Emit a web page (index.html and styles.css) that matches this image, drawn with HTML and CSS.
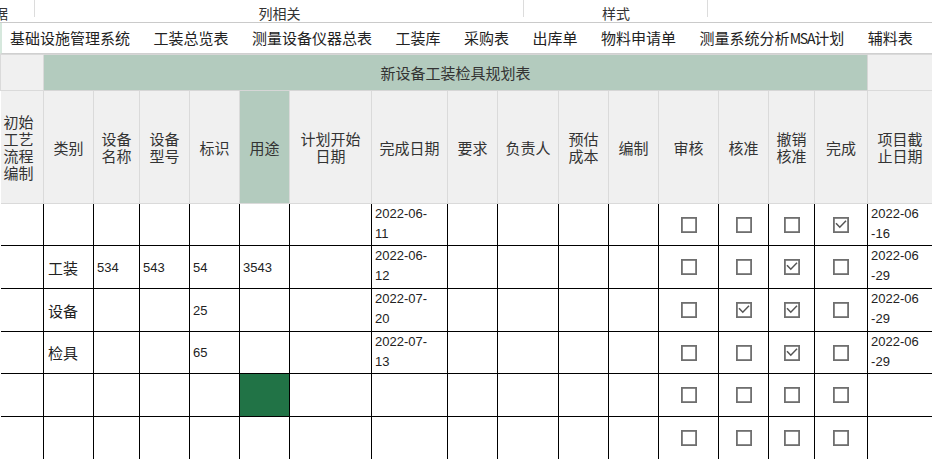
FILE: index.html
```html
<!DOCTYPE html>
<html lang="zh-CN">
<head>
    <meta charset="UTF-8">
    <title>新设备工装检具规划表</title>
    <link rel="stylesheet" href="styles.css">
</head>
<body>
    <div class="ribbon">
        <div class="grp grp-a">数据</div>
        <div class="grp grp-b">列相关</div>
        <div class="grp grp-c">样式</div>
        <div class="grp grp-d"></div>
    </div>

    <div class="tabs">
        <span>基础设施管理系统</span>
        <span>工装总览表</span>
        <span>测量设备仪器总表</span>
        <span>工装库</span>
        <span>采购表</span>
        <span>出库单</span>
        <span>物料申请单</span>
        <span>测量系统分析<span class="latin">MSA</span>计划</span>
        <span>辅料表</span>
    </div>

    <table class="sheet">
        <colgroup>
            <col style="width:43px"><col style="width:50px"><col style="width:46px"><col style="width:50px">
            <col style="width:50px"><col style="width:50px"><col style="width:82px"><col style="width:76px">
            <col style="width:50px"><col style="width:61px"><col style="width:50px"><col style="width:50px">
            <col style="width:60px"><col style="width:50px"><col style="width:46px"><col style="width:53px">
            <col style="width:65px">
        </colgroup>
        <tr class="title-row">
            <td class="hd"></td>
            <td class="band" colspan="15">新设备工装检具规划表</td>
            <td class="hd"></td>
        </tr>
        <tr class="head-row">
            <td class="hd first">初始<br>工艺<br>流程<br>编制</td>
            <td class="hd">类别</td>
            <td class="hd">设备<br>名称</td>
            <td class="hd">设备<br>型号</td>
            <td class="hd">标识</td>
            <td class="hd green">用途</td>
            <td class="hd">计划开始<br>日期</td>
            <td class="hd">完成日期</td>
            <td class="hd">要求</td>
            <td class="hd">负责人</td>
            <td class="hd">预估<br>成本</td>
            <td class="hd">编制</td>
            <td class="hd">审核</td>
            <td class="hd">核准</td>
            <td class="hd">撤销<br>核准</td>
            <td class="hd">完成</td>
            <td class="hd">项目截<br>止日期</td>
        </tr>
    </table>

    <script>
        // rows: [类别, 名称, 型号, 标识, 用途, 完成日期, checks(审核,核准,撤销核准,完成), 截止日期]
        var rows = [
            ['', '', '', '', '', '2022-06-<br>11', [0, 0, 0, 1], '2022-06<br>-16'],
            ['工装', '534', '543', '54', '3543', '2022-06-<br>12', [0, 0, 1, 0], '2022-06<br>-29'],
            ['设备', '', '', '25', '', '2022-07-<br>20', [0, 1, 1, 0], '2022-06<br>-29'],
            ['检具', '', '', '65', '', '2022-07-<br>13', [0, 0, 1, 0], '2022-06<br>-29'],
            ['', '', '', '', 'sel', '', [0, 0, 0, 0], ''],
            ['', '', '', '', '', '', [0, 0, 0, 0], '']
        ];

        function checkbox(on) {
            var svg = '<svg class="cb" width="16" height="16" viewBox="0 0 16 16">' +
                '<rect x="0.9" y="0.9" width="14.2" height="14.2" fill="#fff" stroke="#6f6f6f" stroke-width="1.8"/>';
            if (on) {
                svg += '<polyline points="3,6.2 6.8,10.2 13,3.8" fill="none" stroke="#555" stroke-width="1.5"/>';
            }
            return svg + '</svg>';
        }

        var table = document.querySelector('.sheet');
        rows.forEach(function (r, i) {
            var tr = document.createElement('tr');
            tr.className = 'data-row' + (i % 3 === 0 ? ' short' : '');
            var html = '<td class="first"></td>';
            html += '<td class="cjk">' + r[0] + '</td>';
            html += '<td class="num">' + r[1] + '</td>';
            html += '<td class="num">' + r[2] + '</td>';
            html += '<td class="num">' + r[3] + '</td>';
            html += r[4] === 'sel' ? '<td class="selected"></td>' : '<td class="num">' + r[4] + '</td>';
            html += '<td></td>';
            html += '<td class="num date">' + r[5] + '</td>';
            html += '<td></td><td></td><td></td><td></td>';
            r[6].forEach(function (c) {
                html += '<td class="check">' + checkbox(c) + '</td>';
            });
            html += '<td class="num date">' + r[7] + '</td>';
            tr.innerHTML = html;
            table.appendChild(tr);
        });
    </script>
</body>
</html>
```
FILE: styles.css
```css
body {
    margin: 0;
    width: 932px;
    height: 459px;
    overflow: hidden;
    background: #fff;
    color: #222;
    font-family: "Noto Sans CJK SC", sans-serif;
}

.ribbon {
    display: flex;
    height: 22px;
    border-bottom: 1px solid #cacaca;
    font-size: 14px;
    color: #333;
}
.grp {
    height: 22px;
    line-height: 26px;
    text-align: center;
    white-space: nowrap;
    overflow: hidden;
    box-sizing: border-box;
    background: linear-gradient(#dcdcdc, #dcdcdc) no-repeat right top / 1px 17px;
}
.grp-a {
    width: 35px;
    text-align: right;
    padding-right: 27px;
    direction: rtl;
}
.grp-b {
    width: 489px;
}
.grp-c {
    width: 184px;
}
.grp-d {
    flex: 1;
    background: none;
}

.tabs {
    display: flex;
    gap: 23.5px;
    height: 30px;
    line-height: 30px;
    padding-left: 8px;
    border-left: 2px solid #d6e8dd;
    border-bottom: 1px solid #d0d0d0;
    font-size: 15px;
    color: #222;
    white-space: nowrap;
}
.tabs .latin {
    letter-spacing: -1.2px;
    font-size: 14px;
}

.sheet {
    border-collapse: collapse;
    table-layout: fixed;
    width: 932px;
    border-top: 1px solid #dcdcdc;
}
.sheet td {
    padding: 0;
    overflow: hidden;
    white-space: nowrap;
}

.title-row td {
    height: 35px;
}
.band {
    background: #b3cbbe;
    color: #333;
    font-size: 15px;
    text-align: center;
    border: 1px solid #d6d6d6;
}

.hd {
    background: #f0f0f0;
    border: 1px solid #dadada;
    color: #333;
    font-size: 15px;
    line-height: 17px;
    text-align: center;
    vertical-align: middle;
}
.hd.first {
    text-align: left;
    padding-left: 3px;
    border-left: none;
}
.hd.green {
    background: #b3cbbe;
}
.head-row td {
    height: 112px;
}

.data-row td {
    height: 42px;
    border: 1px solid #000;
    vertical-align: middle;
    padding-left: 3px;
    color: #222;
}
.data-row.short td {
    height: 41px;
}
.data-row td.first {
    border-left: none;
}
.data-row .cjk {
    font-size: 15px;
    padding-left: 4px;
}
.data-row .num {
    font-family: "Liberation Sans", sans-serif;
    font-size: 13px;
    line-height: 19px;
}
.data-row .date {
    vertical-align: top;
    line-height: 20px;
}
.data-row .check {
    text-align: center;
    padding-left: 0;
    line-height: 0;
}
.data-row .selected {
    background: #217346;
}
.cb {
    display: inline-block;
    vertical-align: middle;
}
```
